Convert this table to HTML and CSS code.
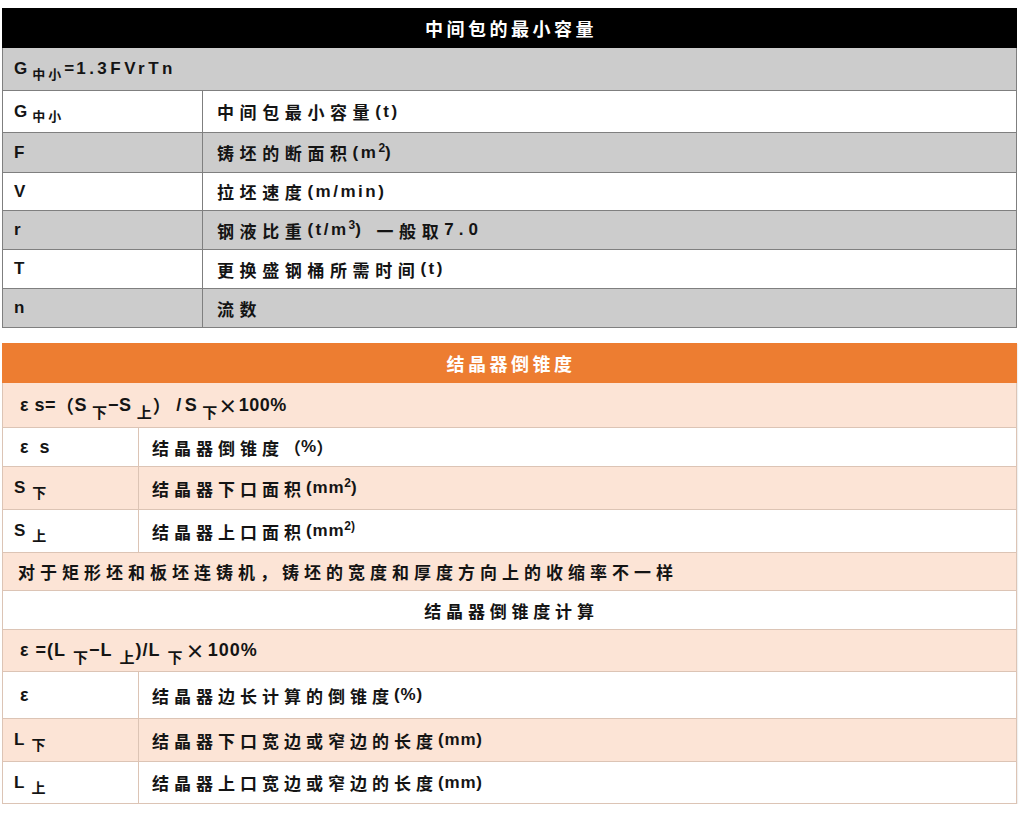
FILE: index.html
```html
<!DOCTYPE html>
<html lang="zh-CN">
<head>
<meta charset="utf-8">
<title>中间包的最小容量 / 结晶器倒锥度</title>
<link rel="stylesheet" href="styles.css">
</head>
<body>
<div class="page">
  <section class="tbl t1">
    <div class="row title-black"><span class="title-text">中间包的最小容量</span></div>
    <div class="row full gray"><span class="cell pad-a">G<span class="sub-s">中小</span>=<span class="wide">1.3FVrTn</span></span></div>
    <div class="row split bt white"><span class="cell c1">G<span class="sub-s">中小</span></span><span class="cell c2"><span class="zh">中间包最小容量</span><span class="en">(t)</span></span></div>
    <div class="row split bt gray"><span class="cell c1">F</span><span class="cell c2"><span class="zh">铸坯的断面积</span><span class="en">(m<sup class="sup">2</sup>)</span></span></div>
    <div class="row split bt white"><span class="cell c1">V</span><span class="cell c2"><span class="zh">拉坯速度</span><span class="en">(m/min)</span></span></div>
    <div class="row split bt gray"><span class="cell c1">r</span><span class="cell c2"><span class="zh">钢液比重</span><span class="en">(t/m<sup class="sup">3</sup>)</span><span class="zh gap">一般取</span><span class="wide2">7.0</span></span></div>
    <div class="row split bt white"><span class="cell c1">T</span><span class="cell c2"><span class="zh">更换盛钢桶所需时间</span><span class="en">(t)</span></span></div>
    <div class="row split bt gray"><span class="cell c1">n</span><span class="cell c2"><span class="zh">流数</span></span></div>
  </section>

  <section class="tbl t2">
    <div class="row title-orange"><span class="title-text">结晶器倒锥度</span></div>
    <div class="row full peach"><span class="cell pad-b fx fx1">ε s= <span class="cjk">（</span>S<span class="sub-f">下</span>−S<span class="sub-f">上</span><span class="cjk">）</span><span class="sl">/</span>S<span class="sub-f">下</span><span class="cjk x">×</span>100%</span></div>
    <div class="row split2 bt white"><span class="cell c1 ind">ε s</span><span class="cell c2b"><span class="zh">结晶器倒锥度</span><span class="cjk">（</span>%<span class="cjk">）</span></span></div>
    <div class="row split2 bt peach"><span class="cell c1">S<span class="sub-l">下</span></span><span class="cell c2b"><span class="zh">结晶器下口面积</span><span class="en">(mm<sup class="sup">2</sup>)</span></span></div>
    <div class="row split2 bt white"><span class="cell c1">S<span class="sub-l">上</span></span><span class="cell c2b"><span class="zh">结晶器上口面积</span><span class="en">(mm<sup class="sup">2)</sup></span></span></div>
    <div class="row full bt peach"><span class="cell pad-c zh note">对于矩形坯和板坯连铸机，铸坯的宽度和厚度方向上的收缩率不一样</span></div>
    <div class="row full bt white center"><span class="cell zh sub-head">结晶器倒锥度计算</span></div>
    <div class="row full bt peach"><span class="cell pad-b fx">ε =(L<span class="sub-f">下</span>−L<span class="sub-f">上</span>)/L<span class="sub-f">下</span><span class="cjk x">×</span>100%</span></div>
    <div class="row split2 bt white"><span class="cell c1 ind">ε</span><span class="cell c2b"><span class="zh">结晶器边长计算的倒锥度</span><span class="en">(%)</span></span></div>
    <div class="row split2 bt peach"><span class="cell c1">L<span class="sub-l">下</span></span><span class="cell c2b"><span class="zh">结晶器下口宽边或窄边的长度</span><span class="en">(mm)</span></span></div>
    <div class="row split2 bt white"><span class="cell c1">L<span class="sub-l">上</span></span><span class="cell c2b"><span class="zh">结晶器上口宽边或窄边的长度</span><span class="en">(mm)</span></span></div>
  </section>
</div>
</body>
</html>
```

FILE: styles.css
```css
* { box-sizing: border-box; }

body {
  margin: 0;
  background: #ffffff;
  color: #141414;
  font-family: "Liberation Sans", "Noto Sans CJK SC", sans-serif;
  font-weight: 700;
  font-size: 17px;
}

.page {
  width: 1017px;
  padding: 8px 0 0 2px;
  display: flex;
  flex-direction: column;
  gap: 15px;
}

.tbl {
  display: grid;
  width: 1015px;
}

.t1 {
  grid-template-rows: 40px 42px 42px 40px 38px 39px 39px 39px;
  border: 1px solid #7f7f7f;
  border-top: none;
  --line: #7f7f7f;
  --zh-space: 5.6px;
  --en-space: 2.5px;
}

.t2 {
  grid-template-rows: 40px 44px 39px 43px 43px 38px 39px 42px 47px 43px 42px;
  border: 1px solid #dcc4b5;
  border-top: none;
  --line: #dcc4b5;
  --zh-space: 5px;
  --en-space: 0.8px;
  box-shadow: 1px 1px 1px rgba(0, 0, 0, 0.06);
}

.row {
  display: flex;
  align-items: center;
  min-width: 0;
}

.row.bt { border-top: 1px solid var(--line); }

.split { display: grid; grid-template-columns: 199px 1fr; align-items: stretch; }
.split2 { display: grid; grid-template-columns: 135px 1fr; align-items: stretch; }

.cell {
  display: flex;
  align-items: center;
  white-space: nowrap;
}

.c1 { padding-left: 11px; }
.c1.ind { padding-left: 17px; letter-spacing: 3px; font-size: 18px; }
.c2 { padding-left: 14px; border-left: 1px solid var(--line); }
.c2b { padding-left: 13px; border-left: 1px solid var(--line); }

.pad-a { padding-left: 11px; }
.pad-b { padding-left: 17px; }
.pad-c { padding-left: 13px; }

.center { justify-content: center; }

.gray { background: #cccccc; }
.white { background: #ffffff; }
.peach { background: #fce4d6; }

.title-black {
  background: #000000;
  color: #ffffff;
  justify-content: center;
  margin: 0 -1px;
}

.title-orange {
  background: #ed7d31;
  color: #ffffff;
  justify-content: center;
  margin: 0 -1px;
}

.title-text {
  font-family: "Noto Sans CJK SC", sans-serif;
  font-size: 18px;
  letter-spacing: 3.5px;
  padding-left: 3px;
}

.zh {
  font-family: "Noto Sans CJK SC", sans-serif;
  font-weight: 700;
  letter-spacing: var(--zh-space);
}

.zh.note { letter-spacing: 5px; padding-left: 15px; }
.zh.sub-head { letter-spacing: 4.8px; padding-left: 4px; }
.zh.gap { margin-left: 13px; }

.cjk {
  font-family: "Noto Sans CJK SC", sans-serif;
}

.en { letter-spacing: var(--en-space); }

.wide { letter-spacing: 3.5px; margin-left: 2px; }
.wide2 { letter-spacing: 5px; }

.fx { font-size: 18px; letter-spacing: 1px; }
.fx .x { font-size: 19px; margin: 0 2px; }
.fx .sl { margin: 0 4px 0 10px; }
.fx1 { letter-spacing: 0.5px; }
.fx1 .sub-f { margin-left: 5px; }
.fx1 .sl { margin: 0 3px 0 5px; }
.fx1 .x { margin: 0 1px 0 0; }

.sub-s {
  font-family: "Noto Sans CJK SC", sans-serif;
  font-size: 13px;
  letter-spacing: 3px;
  margin-left: 5px;
  position: relative;
  top: 4px;
}

.sub-f {
  font-family: "Noto Sans CJK SC", sans-serif;
  font-size: 15px;
  letter-spacing: 0;
  margin: 0 1px 0 7px;
  position: relative;
  top: 6px;
}

.sub-l {
  font-family: "Noto Sans CJK SC", sans-serif;
  font-size: 14px;
  margin-left: 7px;
  position: relative;
  top: 4px;
}

.sup {
  font-size: 12px;
  letter-spacing: 0;
  position: relative;
  top: -6px;
  vertical-align: baseline;
}
```
